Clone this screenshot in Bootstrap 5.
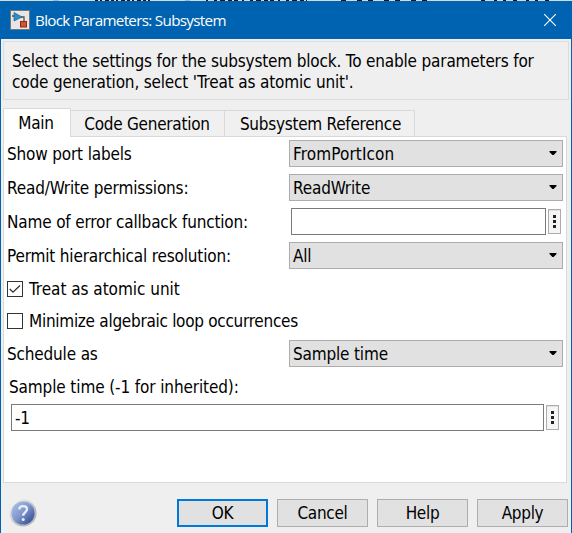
<!DOCTYPE html>
<html lang="en">
<head>
<meta charset="utf-8">
<meta name="viewport" content="width=device-width, initial-scale=1">
<title>Block Parameters: Subsystem</title>
<link href="https://cdn.jsdelivr.net/npm/bootstrap@5.3.0/dist/css/bootstrap.min.css" rel="stylesheet">
<style>
*{box-sizing:border-box}
body{width:572px;height:533px;overflow:hidden;background:#efefef;color:#000;font:17px/20px "DejaVu Sans Condensed","DejaVu Sans",sans-serif;font-stretch:condensed;letter-spacing:-.17px}
.backdrop-strip{height:1px;background:#d5dadb}
.window-frame{border:1px solid #0063b1;border-width:0 1px;height:532px}
.title-strip{height:38px;flex:none;background:#0063b1;color:#fff;padding:0 14px 0 9px;font-family:"Open Sans","Noto Sans",sans-serif;font-size:15.2px;font-stretch:normal;letter-spacing:-.68px}
.title-strip .caption-text{margin-left:5px;white-space:nowrap}
.info-box{margin:2px 2px 0;width:566px;height:59px;border:1px solid #dcdcdc;padding:9px 0 0 8px;line-height:21px;white-space:nowrap;flex:none}
.tab-strip{height:29px;margin:8px 0 0 2px;flex:none;border:0}
.tab-strip .nav-link{height:27px;padding:0;border:1px solid #d9d9d9;border-left:0;border-radius:0;background:#f0f0f0;color:#000;text-align:center;line-height:26px;margin:0;letter-spacing:-.26px}
.tab-strip .nav-link.active{width:68px;height:29px;border:1px solid #d9d9d9;border-bottom:0;background:#fff;color:#000;line-height:28px;padding-right:2px}
.tab-strip .tab-gen{width:154px;padding-right:1px}
.tab-strip .tab-ref{width:190px;padding-left:2px}
.tab-rest{flex:1;height:1px;background:#d9d9d9;margin-right:4px}
.pane{width:564px;height:346px;margin-left:2px;border:1px solid #d9d9d9;border-top:0;background:#fff;flex:none;padding:0 3px}
.field{height:34px;align-items:flex-start}
.field .caption-text{width:282px;line-height:35px}
.field .form-select{width:274px;height:27px;margin-top:3px;border:1px solid #acacac;border-radius:0;background:#e1e1e1;color:#000;font:inherit;font-stretch:condensed;letter-spacing:inherit;line-height:26px;padding:0 5px 0 3px;display:flex;align-items:center;justify-content:space-between}
.field .form-select .wide-text{letter-spacing:.12px}
.field .form-control,.value-row .form-control{height:27px;border:1px solid #7a7a7a;border-radius:0;padding:0 3px;font:inherit;font-stretch:condensed;letter-spacing:inherit;color:#000}
.field .form-control{width:255px;margin:3px 0 0 2px}
.more-btn{width:13px;height:25px;border:1px solid #acacac;border-radius:0;background:#f5f5f5;box-shadow:inset 0 1px #e1e1e1;padding:0;display:flex;align-items:center;justify-content:center;margin-left:2px;flex:none}
.check-row .form-check-input{width:16px;height:16px;border:1px solid #333;border-radius:0;margin:0 6px 0 0;background-color:#fff;box-shadow:none}
.check-row .form-check-input:checked{border-color:#333;background-color:#fff;background-size:16px 16px;background-image:url("data:image/svg+xml,%3Csvg xmlns='http://www.w3.org/2000/svg' viewBox='0 0 16 16'%3E%3Cpath d='M2.7 8 6 11.2 13 4.5' fill='none' stroke='%23333' stroke-width='1.3'/%3E%3C/svg%3E")}
.check-a label{letter-spacing:-.03px}
.check-b label{letter-spacing:-.28px}
.check-a{height:31px}.check-b{height:33px}
.value-label{line-height:32px;height:30px;padding-left:2px;letter-spacing:-.12px}
.value-row{padding:3px 0 0 4px}
.value-row .form-control{width:533px}
.footer-row{padding:16px 3px 0 8px;gap:9px}
.footer-row .btn{width:91px;height:28px;border:1px solid #adadad;border-radius:0;background:#e1e1e1;padding:0;font:inherit;font-stretch:condensed;letter-spacing:-.3px;line-height:27px;color:#000}
.footer-row .btn.ok-btn{border:2px solid #0078d7;line-height:25px}
</style>
<script src="https://cdn.jsdelivr.net/npm/bootstrap@5.3.0/dist/js/bootstrap.bundle.min.js"></script>
</head>
<body>
<svg class="backdrop-strip d-block" width="572" height="1" viewBox="0 0 572 1" stroke="#151515" stroke-width="2">
  <path d="M53 0h6M185 0h5" stroke="#9fb5da"/>
  <path d="M95 0h55" stroke-dasharray="3 2 2 3 4 2"/>
  <path d="M206 0h101" stroke-dasharray="2 6 3 3 5 3 4 2 4 4"/>
  <path d="M341 0h92" stroke-dasharray="5 11 5 6"/>
  <path d="M481 0h72" stroke-dasharray="4 9 3 6 3 7"/>
</svg>
<main class="window-frame d-flex flex-column">
  <header class="title-strip d-flex align-items-center">
    <svg width="20" height="20" viewBox="0 0 20 20">
      <rect x=".5" y=".5" width="19" height="19" fill="#e6e6e6" stroke="#777"/>
      <path d="M2 6h3M11 7h3v5" fill="none" stroke="#555" stroke-width="1.3"/>
      <path d="M4 2.5 12 7 4 11z" fill="#2f8fc4" stroke="#17618f" stroke-width=".7"/>
      <rect x="10.5" y="11.5" width="6" height="5.5" fill="#d9502c" stroke="#8f2a16"/>
    </svg>
    <span class="caption-text">Block Parameters: Subsystem</span>
    <svg class="ms-auto" width="14" height="14" viewBox="0 0 14 14"><path d="M1.2 1.2 12.8 12.8M12.8 1.2 1.2 12.8" stroke="#fff" stroke-width="1.1"/></svg>
  </header>
  <div class="info-box">Select the settings for the subsystem block. To enable parameters for<br>code generation, select 'Treat as atomic unit'.</div>
  <nav class="nav nav-tabs tab-strip d-flex flex-nowrap align-items-end">
    <a class="nav-link active">Main</a>
    <a class="nav-link tab-gen">Code Generation</a>
    <a class="nav-link tab-ref">Subsystem Reference</a>
    <span class="tab-rest"></span>
  </nav>
  <section class="pane">
    <div class="field d-flex"><span class="caption-text">Show port labels</span><div class="form-select"><span class="wide-text">FromPortIcon</span><svg width="8" height="5" viewBox="0 0 8 5"><path d="M.5 0h7v1L4.6 4H3.4L.5 1z"/></svg></div></div>
    <div class="field d-flex"><span class="caption-text">Read/Write permissions:</span><div class="form-select"><span>ReadWrite</span><svg width="8" height="5" viewBox="0 0 8 5"><path d="M.5 0h7v1L4.6 4H3.4L.5 1z"/></svg></div></div>
    <div class="field d-flex"><span class="caption-text">Name of error callback function:</span><input class="form-control" aria-label="Error callback"><button class="more-btn mt-1" aria-label="More"><svg width="3" height="15" viewBox="0 0 3 15"><path d="M0 1h3v3H0zM0 6h3v3H0zM0 11h3v3H0z" fill="#222"/></svg></button></div>
    <div class="field d-flex"><span class="caption-text">Permit hierarchical resolution:</span><div class="form-select"><span>All</span><svg width="8" height="5" viewBox="0 0 8 5"><path d="M.5 0h7v1L4.6 4H3.4L.5 1z"/></svg></div></div>
    <div class="check-row check-a d-flex align-items-center"><input class="form-check-input" type="checkbox" id="atomic" checked><label for="atomic">Treat as atomic unit</label></div>
    <div class="check-row check-b d-flex align-items-center"><input class="form-check-input" type="checkbox" id="loop"><label for="loop">Minimize algebraic loop occurrences</label></div>
    <div class="field d-flex"><span class="caption-text">Schedule as</span><div class="form-select"><span>Sample time</span><svg width="8" height="5" viewBox="0 0 8 5"><path d="M.5 0h7v1L4.6 4H3.4L.5 1z"/></svg></div></div>
    <div class="value-label">Sample time (-1 for inherited):</div>
    <div class="value-row d-flex align-items-center"><input class="form-control" value="-1" aria-label="Sample time"><button class="more-btn" aria-label="More"><svg width="3" height="15" viewBox="0 0 3 15"><path d="M0 1h3v3H0zM0 6h3v3H0zM0 11h3v3H0z" fill="#222"/></svg></button></div>
  </section>
  <footer class="footer-row d-flex">
    <svg class="me-auto" width="28" height="28" viewBox="0 0 28 28">
      <defs>
        <linearGradient id="rim" x2="1" y2="1"><stop stop-color="#fff"/><stop offset=".5" stop-color="#c4c6cc"/><stop offset="1" stop-color="#a5a8b0"/></linearGradient>
        <linearGradient id="ball" x2="1" y2="1"><stop stop-color="#b4c5e4"/><stop offset=".5" stop-color="#7d95cb"/><stop offset="1" stop-color="#1f3a86"/></linearGradient>
      </defs>
      <circle cx="14" cy="14" r="13.6" fill="url(#rim)"/>
      <circle cx="14" cy="14" r="11.6" fill="url(#ball)"/>
      <path d="M10.3 10.5C10.3 5.8 18 6 18 10.3c0 3.2-3.8 3.2-3.8 6.5" fill="none" stroke="#e9eef8" stroke-width="2.3"/>
      <circle cx="14.2" cy="20.4" r="1.5" fill="#e9eef8"/>
    </svg>
    <button class="btn ok-btn">OK</button>
    <button class="btn">Cancel</button>
    <button class="btn">Help</button>
    <button class="btn">Apply</button>
  </footer>
</main>
</body>
</html>
